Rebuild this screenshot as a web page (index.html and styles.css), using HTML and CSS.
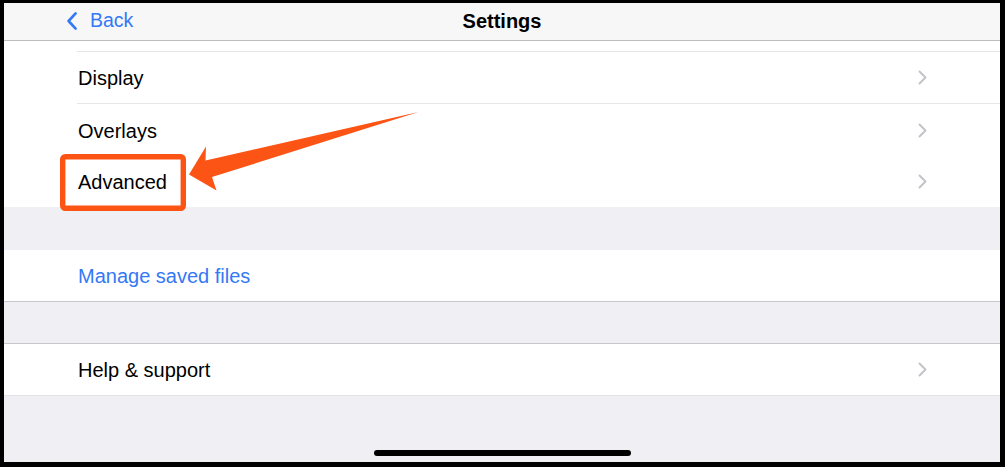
FILE: index.html
```html
<!DOCTYPE html>
<html lang="en">
<head>
<meta charset="utf-8">
<title>Settings</title>
<link rel="stylesheet" href="styles.css">
</head>
<body>
<div class="screen">
  <header class="nav">
    <a class="back" href="#">
      <svg class="back-chevron" width="10" height="18" viewBox="0 0 10 18"><path d="M8.6 1.4 L1.6 9 L8.6 16.6" fill="none" stroke="#3478f6" stroke-width="2.6" stroke-linecap="round" stroke-linejoin="round"/></svg>
      <span>Back</span>
    </a>
    <h1 class="title">Settings</h1>
    <div class="nav-spacer"></div>
  </header>
  <main class="list">
    <section class="group group-first">
      <div class="row"><div class="cell cell-cut"></div></div>
      <div class="row"><div class="cell"><span class="label">Display</span><svg class="chev" width="9" height="15" viewBox="0 0 9 15"><path d="M1.5 1.5 L7.5 7.5 L1.5 13.5" fill="none" stroke="#c4c4c8" stroke-width="2" stroke-linecap="round" stroke-linejoin="round"/></svg></div></div>
      <div class="row"><div class="cell cell-plain"><span class="label">Overlays</span><svg class="chev" width="9" height="15" viewBox="0 0 9 15"><path d="M1.5 1.5 L7.5 7.5 L1.5 13.5" fill="none" stroke="#c4c4c8" stroke-width="2" stroke-linecap="round" stroke-linejoin="round"/></svg></div></div>
      <div class="row"><div class="cell cell-last"><span class="label">Advanced</span><svg class="chev" width="9" height="15" viewBox="0 0 9 15"><path d="M1.5 1.5 L7.5 7.5 L1.5 13.5" fill="none" stroke="#c4c4c8" stroke-width="2" stroke-linecap="round" stroke-linejoin="round"/></svg></div></div>
    </section>
    <div class="gap gap-1"></div>
    <section class="group group-manage">
      <div class="row"><div class="cell cell-last"><span class="label link">Manage saved files</span></div></div>
    </section>
    <div class="gap gap-2"></div>
    <section class="group group-help">
      <div class="row"><div class="cell cell-last"><span class="label">Help &amp; support</span><svg class="chev" width="9" height="15" viewBox="0 0 9 15"><path d="M1.5 1.5 L7.5 7.5 L1.5 13.5" fill="none" stroke="#c4c4c8" stroke-width="2" stroke-linecap="round" stroke-linejoin="round"/></svg></div></div>
    </section>
    <div class="gap gap-fill"></div>
  </main>
  <div class="home-indicator"></div>
  <svg class="annotation" width="1005" height="467" viewBox="0 0 1005 467">
    <rect x="62.7" y="156.7" width="120.6" height="51.6" rx="2.5" fill="none" stroke="#fc5414" stroke-width="5.4"/>
    <polygon points="189,174.5 206,146.5 205.5,160.5 418.5,112 212,177 216.5,190.5" fill="#fc5414"/>
  </svg>
</div>
</body>
</html>
```
FILE: styles.css
```css
* { box-sizing: border-box; }

html, body {
  margin: 0;
  padding: 0;
  background: #ffffff;
}

body {
  font-family: "Liberation Sans", Arial, sans-serif;
  color: #000;
}

.screen {
  position: relative;
  width: 1005px;
  height: 467px;
  border-style: solid;
  border-color: #000;
  border-width: 3px 5px 5px 4px;
  display: flex;
  flex-direction: column;
  background: #efeff4;
  overflow: hidden;
}

.nav {
  height: 38px;
  flex: none;
  background: #f7f7f7;
  border-bottom: 1px solid #bdbdc0;
  display: grid;
  grid-template-columns: 1fr auto 1fr;
  align-items: center;
  padding: 0;
}

.back {
  justify-self: start;
  margin-left: 63px;
  display: flex;
  align-items: center;
  gap: 13px;
  color: #3478f6;
  text-decoration: none;
  font-size: 19.5px;
  line-height: 1;
  padding-bottom: 2px;
}

.back-chevron { display: block; margin-top: 1px; }

.title {
  margin: 0;
  font-size: 20px;
  font-weight: bold;
  letter-spacing: 0;
  line-height: 1;
  padding-bottom: 2px;
}

.list {
  flex: 1;
  display: flex;
  flex-direction: column;
}

.group {
  background: #fff;
  flex: none;
}

.row {
  padding-left: 73px;
}

.cell {
  height: 52px;
  border-bottom: 1px solid #e6e6ea;
  padding: 0 73px 0 1px;
  display: flex;
  align-items: center;
  justify-content: space-between;
}

.cell-cut { height: 11px; }

.cell-plain,
.cell-last {
  height: 52px;
  border-bottom: none;
}

.cell-last { height: 51px; }

.label {
  font-size: 20px;
  line-height: 1;
  padding-top: 1px;
}

.link { color: #3478f6; }

.chev { display: block; flex: none; }

.gap { background: #efeff4; flex: none; }
.gap-1 { height: 43px; }
.gap-2 { height: 41px; }
.gap-fill { flex: 1; }

.group-manage { border-bottom: 1px solid #c8c7cc; }
.group-help {
  border-top: 1px solid #c8c7cc;
  border-bottom: 1px solid #e2e2e6;
}

.home-indicator {
  position: absolute;
  left: 370px;
  bottom: 6px;
  width: 257px;
  height: 6px;
  border-radius: 3px;
  background: #000;
}

.annotation {
  position: absolute;
  left: -4px;
  top: -3px;
  pointer-events: none;
}
```
